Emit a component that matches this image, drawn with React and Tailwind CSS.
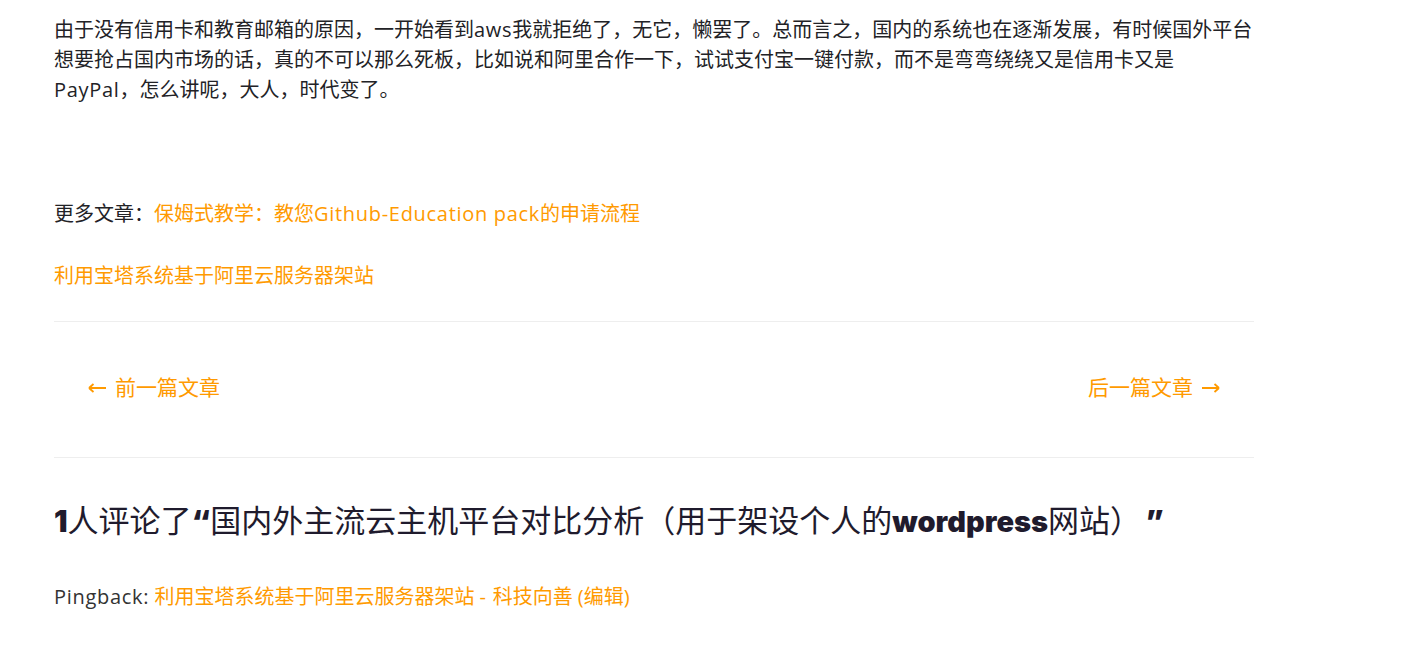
import React from 'react';

const body = { fontFamily: '"Open Sans", "Noto Sans CJK SC", sans-serif' };
const heavy = { fontFamily: 'Inter, "Noto Sans CJK SC", sans-serif' };

// Latin runs in the original font are a bit wider than Open Sans
function L({ children }) {
    return <span className="tracking-[0.7px]">{children}</span>;
}

function Arrow({ dir = 'left' }) {
    return (
        <svg width="19" height="12" viewBox="0 0 19 12" className="inline-block" style={{ transform: dir === 'right' ? 'scaleX(-1)' : undefined }}>
            <path d="M1 6 H18" stroke="currentColor" strokeWidth="2" />
            <path d="M1 6 L5.5 2 M1 6 L5.5 10" stroke="currentColor" strokeWidth="1.8" fill="none" />
        </svg>
    );
}

export default function App() {
    return (
        <div className="min-h-screen bg-white text-[#222226]" style={body}>
            <div className="ml-[54px] w-[1200px] pt-[15px] pb-[40px]">
                {/* article tail */}
                <p className="text-[20px] leading-[30px]">
                    <span className="block whitespace-nowrap">由于没有信用卡和教育邮箱的原因，一开始看到<L>aws</L>我就拒绝了，无它，懒罢了。总而言之，国内的系统也在逐渐发展，有时候国外平台</span>
                    <span className="block whitespace-nowrap">想要抢占国内市场的话，真的不可以那么死板，比如说和阿里合作一下，试试支付宝一键付款，而不是弯弯绕绕又是信用卡又是</span>
                    <span className="block whitespace-nowrap"><L>PayPal</L>，怎么讲呢，大人，时代变了。</span>
                </p>

                <p className="mt-[94px] text-[20px] leading-[30px]">
                    更多文章：<a className="text-[#ff9a00]">保姆式教学：教您<L>Github-Education pack</L>的申请流程</a>
                </p>
                <p className="mt-[32px] text-[20px] leading-[30px]">
                    <a className="text-[#ff9a00]">利用宝塔系统基于阿里云服务器架站</a>
                </p>

                {/* post navigation */}
                <div className="mt-[30px] border-t border-b border-[#eeeeee] h-[137px] px-[34px] pb-[4px] flex items-center justify-between text-[21px] text-[#ff9a00]">
                    <a className="flex items-center gap-[8px]"><Arrow />前一篇文章</a>
                    <a className="flex items-center gap-[8px]">后一篇文章<Arrow dir="right" /></a>
                </div>

                {/* comments */}
                <h3 className="mt-[42px] text-[31px] leading-[40px] text-[#1f1b2d] whitespace-nowrap">
                    <span className="font-black text-[30px]" style={heavy}>1</span>人评论了<span className="font-black text-[30px]" style={heavy}>“</span>国内外主流云主机平台对比分析（用于架设个人的<span className="font-black text-[29px]" style={heavy}>wordpress</span>网站）<span className="font-black text-[30px] ml-[20px]" style={heavy}>”</span>
                </h3>
                <p className="mt-[40px] text-[20px] leading-[30px] text-[#333]">
                    <L>Pingback:</L> <a className="text-[#ff9a00]">利用宝塔系统基于阿里云服务器架站 <L> - </L> 科技向善</a> <a className="text-[#ff9a00]">(编辑)</a>
                </p>
            </div>
        </div>
    );
}
